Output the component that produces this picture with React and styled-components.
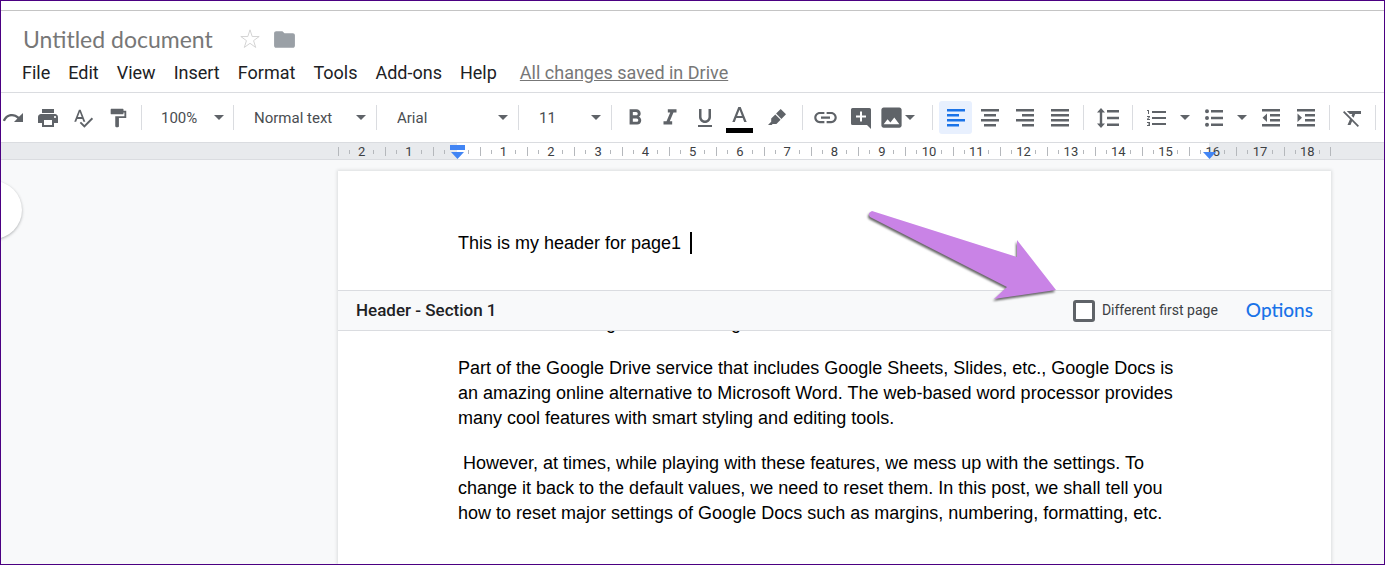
import styled, { createGlobalStyle } from "styled-components";
import {
  MdPrint,
  MdSpellcheck,
  MdFormatPaint,
  MdFormatBold,
  MdFormatItalic,
  MdFormatUnderlined,
  MdLink,
  MdImage,
  MdFormatListNumbered,
  MdFormatClear,
  MdFolder,
} from "react-icons/md";

const GlobalStyle = createGlobalStyle`
  * {
    box-sizing: border-box;
  }
  body {
    margin: 0;
    font-family: Roboto, "Liberation Sans", sans-serif;
    color: #202124;
  }
  button, select, input {
    margin: 0;
    padding: 0;
    border: 0;
    background: none;
    font: inherit;
    color: inherit;
  }
`;

const Editor = styled.div`
  display: flex;
  flex-direction: column;
  min-height: 100vh;
  overflow: hidden;
  border: 1px solid #4b0082;
  background: #f8f9fa;
`;

const TitleBar = styled.header`
  margin-top: 9px;
  padding: 15px 0 0 21px;
  border-top: 1px solid #c4c4c4;
  border-bottom: 1px solid #dadce0;
  background: #fff;
  box-shadow: 0 -9px 0 #fff;
`;

const TitleRow = styled.div`
  display: flex;
  align-items: center;
  height: 26px;
`;

const DocTitle = styled.h1`
  margin: 0 26px 0 1px;
  font-family: Lato, sans-serif;
  font-size: 23px;
  font-weight: 400;
  line-height: 26px;
  color: #777;
`;

const TitleButton = styled.button`
  display: flex;
  margin-right: 11px;
  color: ${props => props.color};
`;

const Menus = styled.nav`
  display: flex;
  align-items: center;
  gap: 18px;
  height: 40px;
  padding-top: 2px;
  font-size: 18px;
  line-height: 24px;
`;

const MenuButton = styled.button`
  color: #202124;
`;

const SavedLink = styled.a`
  margin-left: 5px;
  color: #777;
  text-decoration: underline;
`;

const Toolbar = styled.div`
  display: flex;
  align-items: center;
  height: 49px;
  overflow: hidden;
  background: #fff;
  color: #5f6368;
`;

const Group = styled.div`
  display: flex;
  flex: none;
  align-items: center;
  height: 25px;
  padding: 0 ${props => props.$pad ?? 5}px;
  border-right: 1px solid #dadce0;
`;

const StartGroup = styled(Group)`
  padding: 0 6px 0 0;
`;

const Tool = styled.button`
  display: flex;
  flex: none;
  align-items: center;
  justify-content: ${props => props.$justify || "center"};
  width: ${props => props.$width || 35}px;
  height: 33px;
  border-radius: 3px;
  background: ${props => (props.$on ? "#e8f0fe" : "transparent")};
  color: ${props => (props.$on ? "#1a73e8" : "#5f6368")};
`;

const Arrow = styled.span`
  width: 0;
  border: 5px solid transparent;
  border-top-color: #5f6368;
  border-bottom: 0;
`;

const Picker = styled.label`
  display: flex;
  align-items: center;
  justify-content: space-between;
  width: ${props => props.$width}px;
  padding: 0 5px 0 15px;
`;

const PickerSelect = styled.select`
  flex: 1;
  appearance: none;
  min-width: 0;
  font-size: 15px;
  line-height: 20px;
  color: #4a4d51;
`;

const RulerBar = styled.div`
  display: flex;
  height: 18px;
  padding: 0 53px 0 337px;
  border-top: 1px solid #dadce0;
  border-bottom: 1px solid #dadce0;
  background: #e8eaed;
`;

const Ruler = styled.div`
  position: relative;
  display: grid;
  flex: 1;
  grid-template-columns: repeat(21, 1fr);
  align-items: center;
  background: linear-gradient(#fff, #fff) 119px 0 / calc(100% - 241px) 100% no-repeat;
  &::after {
    content: "";
    position: absolute;
    right: 0;
    width: 1px;
    height: 9px;
    background: #b5b8bc;
  }
`;

const Centimetre = styled.div`
  display: grid;
  grid-template-columns: 11px 1fr 11px;
  align-items: center;
`;

const Number = styled.div`
  display: flex;
  align-items: center;
  justify-content: space-between;
  padding-top: 1px;
  font-size: 13px;
  line-height: 16px;
  color: #3c4043;
`;

const Tick = styled.i`
  width: 1px;
  height: ${props => (props.$small ? 4 : 9)}px;
  background: #b5b8bc;
`;

const Marker = styled.svg`
  position: absolute;
  top: 1px;
  left: ${props => props.$left};
`;

const Workspace = styled.main`
  position: relative;
  display: flex;
  flex: 1;
  padding: 11px 53px 0 337px;
`;

const OutlineButton = styled.button`
  position: absolute;
  top: 21px;
  left: -37px;
  width: 58px;
  height: 58px;
  border-radius: 50%;
  background: #fff;
  box-shadow: 0 1px 3px rgba(60, 64, 67, 0.4);
`;

const Page = styled.article`
  flex: 1;
  min-width: 0;
  background: #fff;
  box-shadow: 0 0 3px 1px rgba(60, 64, 67, 0.15);
  font-family: "Liberation Sans", Arial, sans-serif;
  font-size: 18px;
  line-height: 25px;
  color: #000;
`;

const HeaderText = styled.div`
  display: flex;
  align-items: center;
  gap: 9px;
  height: 119px;
  padding: 25px 120px 0;
`;

const Caret = styled.span`
  width: 2px;
  height: 22px;
  background: #000;
`;

const SectionBar = styled.div`
  position: relative;
  display: flex;
  align-items: center;
  height: 41px;
  padding: 0 18px;
  border-top: 1px solid #dadce0;
  border-bottom: 1px solid #dadce0;
  background: #f8f9fa;
  font-family: Roboto, sans-serif;
`;

const SectionName = styled.h2`
  flex: 1;
  margin: 0;
  font-size: 17px;
  font-weight: 500;
  color: #202124;
`;

const CheckLabel = styled.label`
  display: flex;
  align-items: center;
  gap: 7px;
  font-size: 14px;
  color: #3c4043;
`;

const Checkbox = styled.input`
  appearance: none;
  width: 22px;
  height: 22px;
  border: 3px solid #5f6368;
  border-radius: 3px;
  background: #fff;
`;

const OptionsButton = styled.button`
  margin-left: 28px;
  font-family: Lato, sans-serif;
  font-size: 19px;
  font-weight: 500;
  line-height: 24px;
  padding-bottom: 2px;
  color: #1a73e8;
`;

const Body = styled.div`
  margin-top: -20px;
  padding: 0 143px 0 120px;
`;

const Paragraph = styled.p`
  margin: 0 0 20px;
  white-space: pre-wrap;
`;

const Pointer = styled.svg`
  position: absolute;
  top: 44px;
  right: 328px;
  z-index: 1;
  overflow: visible;
  pointer-events: none;
  filter: drop-shadow(-1px 2px 1px rgba(0, 0, 0, 0.6));
`;

const menus = ["File", "Edit", "View", "Insert", "Format", "Tools", "Add-ons", "Help"];
const marks = Array.from({ length: 21 }, (_, i) => i - 2);

const Select = ({ label, value, width }) => (
  <Picker $width={width}>
    <PickerSelect aria-label={label} defaultValue={value}>
      <option>{value}</option>
    </PickerSelect>
    <Arrow />
  </Picker>
);

const Glyph = ({ d }) => (
  <svg width="22" height="22" viewBox="0 0 22 22" fill="currentColor">
    <path d={d} fillRule="evenodd" />
  </svg>
);

const icons = {
  redo: "M22 6v9h-9l3.400-3.400C14.500 10 12.800 9.300 11 9.300c-3.200 0-5.900 2-7 4.900l-2.200-.7C3.200 9.500 6.800 6.900 11 6.900c2.700 0 5.100 1 7 2.900z",
  highlight: "M14.700 2 20 7.300l-4.600 4.600-5.300-5.300zM9.300 7.400l5.300 5.300-4.200 4.200H6.600L5.700 18H2l3.200-3.300v-3.200z",
  comment: "M2.500 1h17A1.500 1.500 0 0 1 21 2.500V22l-4-4H2.500A1.500 1.500 0 0 1 1 16.500v-14A1.500 1.500 0 0 1 2.500 1zM10 4.500v4H6v2h4v4h2v-4h4v-2h-4v-4z",
  left: "M2 2h18v2.500H2zM2 7h12v2.500H2zM2 12h18v2.500H2zM2 17h12v2.500H2z",
  center: "M2 2h18v2.500H2zM5 7h12v2.500H5zM2 12h18v2.500H2zM5 17h12v2.500H5z",
  right: "M2 2h18v2.500H2zM8 7h12v2.500H8zM2 12h18v2.500H2zM8 17h12v2.500H8z",
  justify: "M2 2h18v2.500H2zM2 7h18v2.500H2zM2 12h18v2.500H2zM2 17h18v2.500H2z",
  spacing: "M4 1l4 4.500H5.200v11H8L4 21l-4-4.500h2.800v-11H0zM10 3h12v2.500H10zM10 9.700h12v2.500H10zM10 16.500h12V19H10z",
  bullets: "M8 3h12v2.500H8zM8 9.700h12v2.500H8zM8 16.500h12V19H8zM4 2.200a2 2 0 1 1 0 4 2 2 0 0 1 0-4zM4 9a2 2 0 1 1 0 4 2 2 0 0 1 0-4zM4 15.700a2 2 0 1 1 0 4 2 2 0 0 1 0-4z",
  outdent: "M2 2h18v2.500H2zM10 7h10v2.500H10zM10 12h10v2.500H10zM2 17h18v2.500H2zM7 6.500v8.500l-4.500-4.200z",
  indent: "M2 2h18v2.500H2zM10 7h10v2.500H10zM10 12h10v2.500H10zM2 17h18v2.500H2zM2.500 6.500v8.500L7 10.800z",
};

const TextColorIcon = () => (
  <svg width="27" height="31" viewBox="0 0 27 31">
    <path d="M12.300 5h2.400l6 15h-2.500l-1.500-3.900h-6.400L8.800 20H6.300zM11.100 13.900h4.800L13.500 7.700z" fill="#5f6368" fillRule="evenodd" />
    <path d="M0 26h27v5H0z" fill="#000" />
  </svg>
);

const App = () => (
  <>
    <GlobalStyle />
    <Editor>
      <TitleBar>
        <TitleRow>
          <DocTitle>Untitled document</DocTitle>
          <TitleButton aria-label="Star" color="#d0d0d0">
            <svg width="22" height="22" viewBox="0 0 24 24" fill="none" stroke="currentColor">
              <path d="m12 2 2.400 7.300H22l-6.100 4.500 2.300 7.400-6.200-4.500-6.200 4.500 2.300-7.400L2 9.300h7.600z" />
            </svg>
          </TitleButton>
          <TitleButton aria-label="Move to folder" color="#9aa0a6">
            <MdFolder size={25} />
          </TitleButton>
        </TitleRow>
        <Menus>
          {menus.map(name => (
            <MenuButton key={name}>{name}</MenuButton>
          ))}
          <SavedLink href="#saved">All changes saved in Drive</SavedLink>
        </Menus>
      </TitleBar>

      <Toolbar>
        <StartGroup>
          <Tool $width={29} $justify="flex-start" aria-label="Redo"><Glyph d={icons.redo} /></Tool>
          <Tool aria-label="Print"><MdPrint size={24} /></Tool>
          <Tool aria-label="Spelling check"><MdSpellcheck size={22} /></Tool>
          <Tool aria-label="Paint format"><MdFormatPaint size={22} /></Tool>
        </StartGroup>
        <Group $pad={4}><Select label="Zoom" value="100%" width={83} /></Group>
        <Group><Select label="Styles" value="Normal text" width={132} /></Group>
        <Group><Select label="Font" value="Arial" width={131} /></Group>
        <Group><Select label="Font size" value="11" width={82} /></Group>
        <Group>
          <Tool aria-label="Bold"><MdFormatBold size={26} /></Tool>
          <Tool aria-label="Italic"><MdFormatItalic size={26} /></Tool>
          <Tool aria-label="Underline"><MdFormatUnderlined size={24} /></Tool>
          <Tool aria-label="Text color"><TextColorIcon /></Tool>
          <Tool $width={40} aria-label="Highlight color"><Glyph d={icons.highlight} /></Tool>
        </Group>
        <Group>
          <Tool aria-label="Insert link"><MdLink size={27} /></Tool>
          <Tool aria-label="Add comment"><Glyph d={icons.comment} /></Tool>
          <Tool $width={49} $justify="flex-start" aria-label="Insert image"><MdImage size={27} /><Arrow /></Tool>
        </Group>
        <Group $pad={6}>
          <Tool $on $width={33} aria-label="Align left"><Glyph d={icons.left} /></Tool>
          <Tool aria-label="Align center"><Glyph d={icons.center} /></Tool>
          <Tool aria-label="Align right"><Glyph d={icons.right} /></Tool>
          <Tool aria-label="Justify"><Glyph d={icons.justify} /></Tool>
        </Group>
        <Group><Tool $width={38} aria-label="Line spacing"><Glyph d={icons.spacing} /></Tool></Group>
        <Group $pad={6}>
          <Tool aria-label="Numbered list"><MdFormatListNumbered size={24} /></Tool>
          <Tool $width={22} aria-label="Numbered list options"><Arrow /></Tool>
          <Tool aria-label="Bulleted list"><Glyph d={icons.bullets} /></Tool>
          <Tool $width={22} aria-label="Bulleted list options"><Arrow /></Tool>
          <Tool aria-label="Decrease indent"><Glyph d={icons.outdent} /></Tool>
          <Tool aria-label="Increase indent"><Glyph d={icons.indent} /></Tool>
        </Group>
        <Group><Tool aria-label="Clear formatting"><MdFormatClear size={24} /></Tool></Group>
      </Toolbar>

      <RulerBar>
        <Ruler>
          {marks.map(n => (
            <Centimetre key={n}>
              <Tick />
              <Number>
                <Tick $small />
                {n !== 0 && <span>{Math.abs(n)}</span>}
                <Tick $small />
              </Number>
            </Centimetre>
          ))}
          <Marker $left="112px" width="15" height="15" fill="#4285f4">
            <path d="M0 1h15v5H0zM1 8h13l-6.500 7z" />
          </Marker>
          <Marker $left="calc(100% - 129px)" width="15" height="15" fill="#4285f4">
            <path d="M1 8h13l-6.500 7z" />
          </Marker>
        </Ruler>
      </RulerBar>

      <Workspace>
        <OutlineButton aria-label="Show document outline" />
        <Page>
          <HeaderText>
            <span>This is my header for page1</span>
            <Caret />
          </HeaderText>
          <SectionBar>
            <SectionName>Header - Section 1</SectionName>
            <CheckLabel>
              <Checkbox type="checkbox" />
              Different first page
            </CheckLabel>
            <OptionsButton>Options</OptionsButton>
          </SectionBar>
          <Body>
            <Paragraph>How to Alter Settings in Docs Using</Paragraph>
            <Paragraph>
              Part of the Google Drive service that includes Google Sheets, Slides, etc., Google Docs is
              {" "}an amazing online alternative to Microsoft Word. The web-based word processor provides
              {" "}many cool features with smart styling and editing tools.
            </Paragraph>
            <Paragraph>
              {" "}However, at times, while playing with these features, we mess up with the settings. To
              {" "}change it back to the default values, we need to reset them. In this post, we shall tell you
              {" "}how to reset major settings of Google Docs such as margins, numbering, formatting, etc.
            </Paragraph>
          </Body>
        </Page>
        <Pointer width="190" height="90" viewBox="0 0 190 90" fill="#c983e6">
          <path d="M6 7Q1 9 4 13L141 83 128 95 190 86 151 36V53z" />
        </Pointer>
      </Workspace>
    </Editor>
  </>
);

export default App;
